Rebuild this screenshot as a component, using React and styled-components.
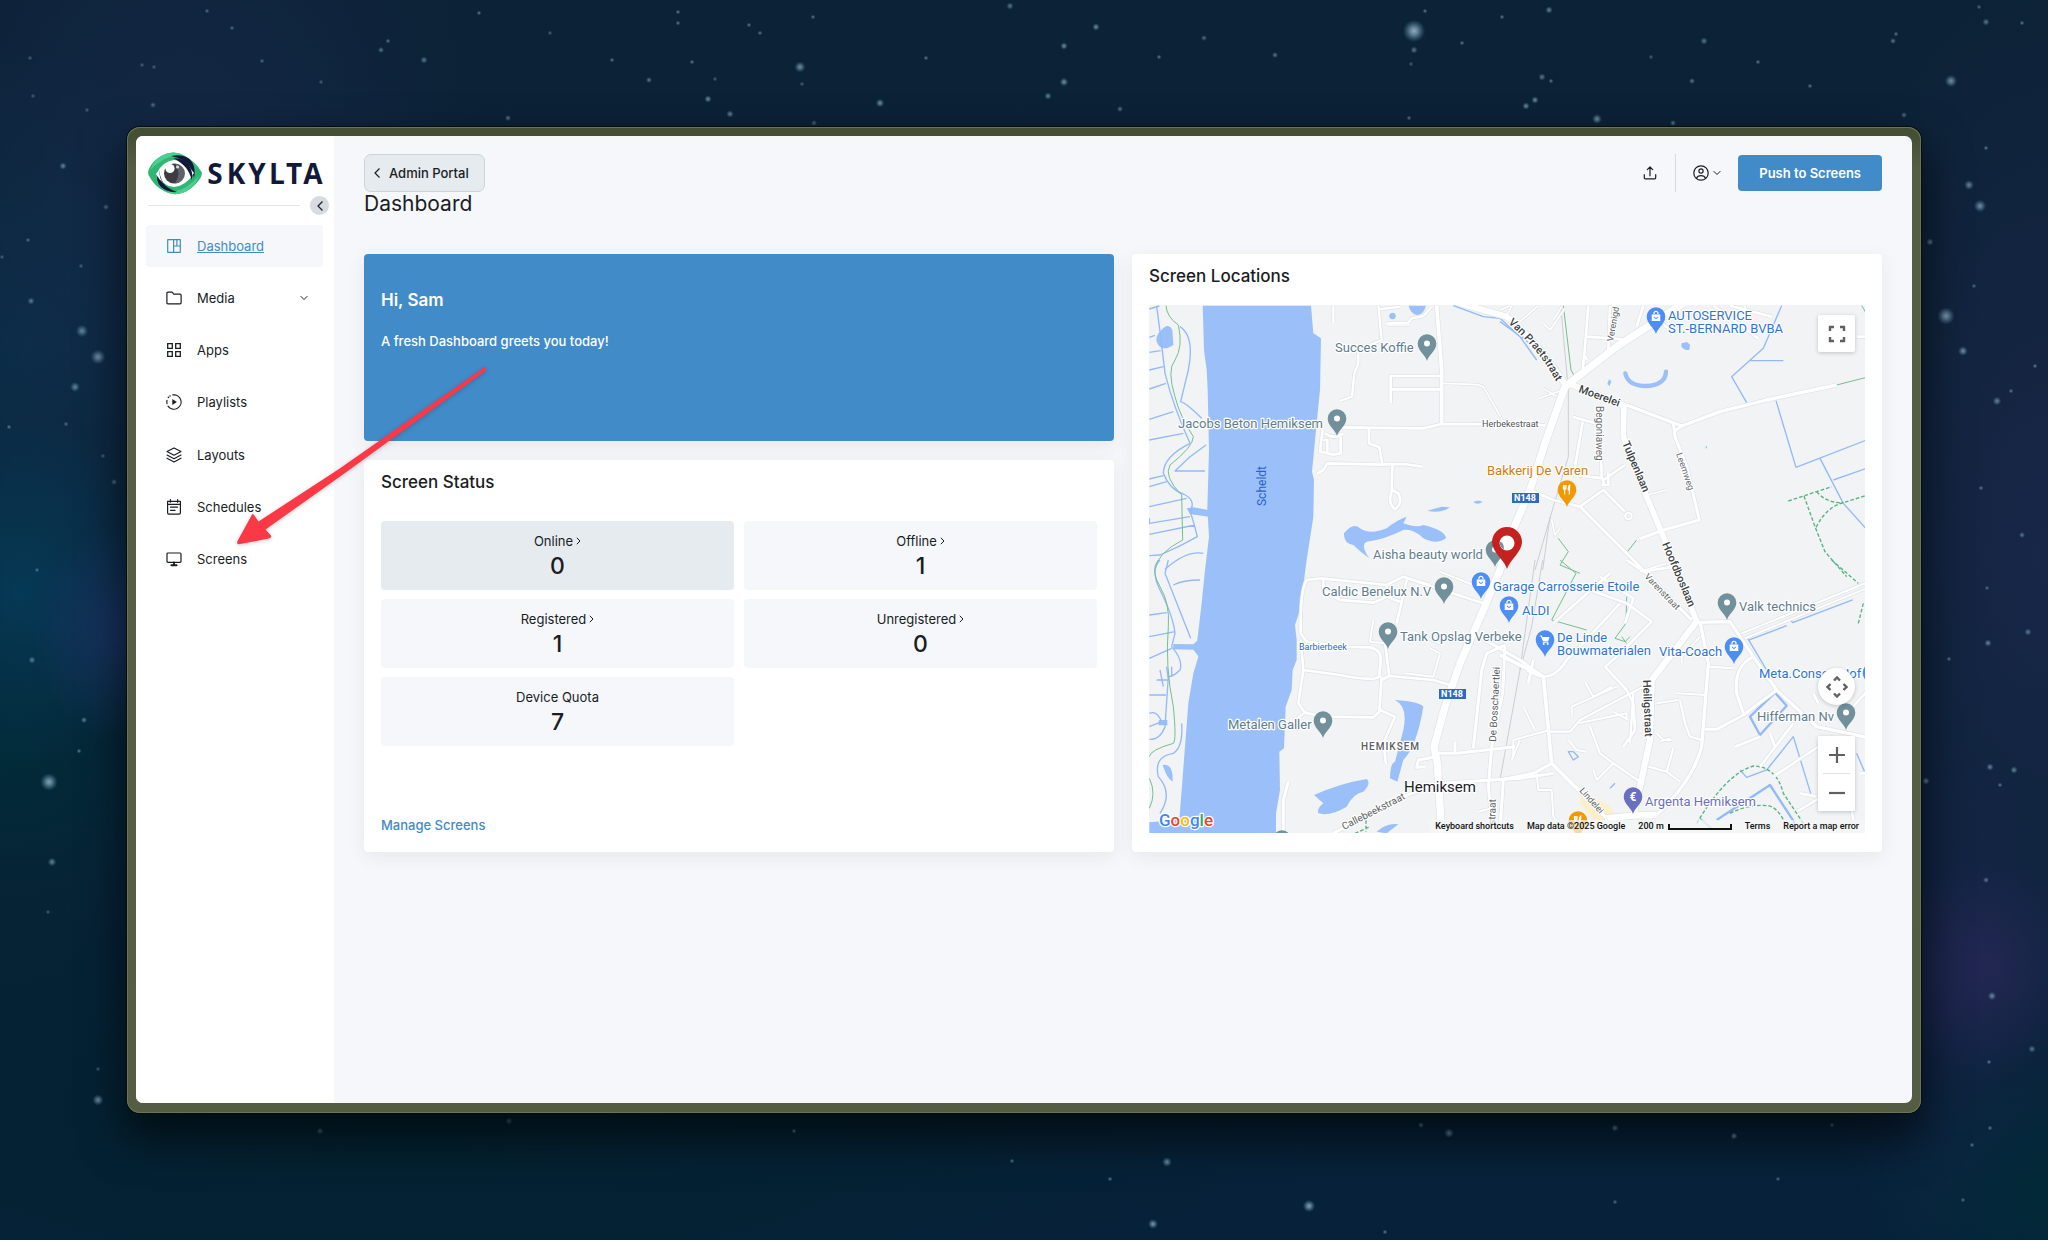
import React from "react";
import styled, { createGlobalStyle, css } from "styled-components";

const sans = `Inter, "Liberation Sans", sans-serif`;
const mapFont = `Roboto, "Liberation Sans", sans-serif`;
const blue = "#418bc9";
const ink = "#1a1d23";

const GlobalStyle = createGlobalStyle`
  *, *::before, *::after { box-sizing: border-box; }
  body { margin: 0; background: #0a2035; font-family: ${sans}; color: ${ink}; }
  h1, h2, p, ul, dl, dd { margin: 0; padding: 0; }
  button { font-family: inherit; cursor: pointer; }
`;

/* ---------- desktop ---------- */

const Desktop = styled.div`
  position: relative;
  isolation: isolate;
  min-height: 100vh;
  padding: 127px;
  display: flex;
  overflow: hidden;
  background:
    radial-gradient(ellipse 100px 110px at 97% 78%, rgba(66, 44, 112, 0.35), transparent),
    radial-gradient(ellipse 130px 260px at 95% 80%, rgba(40, 38, 92, 0.35), transparent),
    radial-gradient(ellipse 90px 110px at 6% 51%, rgba(32, 54, 112, 0.65), transparent),
    radial-gradient(ellipse 150px 180px at 1% 48%, rgba(0, 78, 112, 0.5), transparent),
    radial-gradient(ellipse 300px 420px at 9% 14%, rgba(28, 44, 84, 0.5), transparent),
    radial-gradient(ellipse 240px 300px at 1% 28%, rgba(8, 56, 84, 0.5), transparent),
    radial-gradient(ellipse 260px 160px at 0% 62%, rgba(0, 44, 56, 0.8), transparent),
    radial-gradient(ellipse 900px 260px at 20% 92%, rgba(2, 34, 46, 0.8), transparent),
    radial-gradient(ellipse 200px 160px at 100% 96%, rgba(0, 44, 56, 0.8), transparent),
    radial-gradient(ellipse 260px 600px at 100% 45%, rgba(30, 40, 78, 0.7), transparent),
    linear-gradient(180deg, #0c2236 0%, #0b2238 45%, #062236 78%, #07213a 100%);
`;

const Sky = styled.svg`
  position: absolute;
  inset: 0;
  width: 100%;
  height: 100%;
  z-index: -1;
`;

// [x, y, radius, opacity]
const starField = [
  [800, 67, 4.5, 0.5], [232, 28, 2, 0.35], [207, 11, 2, 0.35], [388, 41, 2, 0.4], [381, 50, 2.5, 0.4],
  [424, 60, 3, 0.4], [262, 61, 2, 0.35], [30, 58, 2, 0.3], [142, 65, 2, 0.3], [154, 67, 2, 0.3],
  [479, 13, 2, 0.4], [550, 33, 2, 0.3], [612, 60, 2, 0.4], [678, 12, 2, 0.4], [678, 23, 2, 0.4],
  [749, 25, 2, 0.4], [760, 33, 2, 0.4], [813, 17, 2, 0.4], [692, 62, 2, 0.4], [649, 80, 2.5, 0.4],
  [708, 99, 3, 0.5], [715, 79, 2, 0.3], [730, 114, 3, 0.45], [880, 103, 3.5, 0.5], [802, 84, 2, 0.3],
  [508, 118, 2.5, 0.4], [814, 123, 2.5, 0.3], [321, 82, 2, 0.3], [153, 105, 2.5, 0.35], [33, 96, 2, 0.3],
  [87, 110, 2, 0.3], [926, 58, 2, 0.4], [1010, 6, 3, 0.4], [63, 166, 3, 0.45], [106, 207, 2.5, 0.35],
  [28, 240, 2, 0.35], [81, 266, 2, 0.3], [31, 301, 3, 0.4], [82, 331, 5, 0.45], [98, 357, 6, 0.5],
  [75, 387, 4, 0.45], [9, 427, 2, 0.4], [66, 424, 2, 0.35], [114, 482, 2.5, 0.35], [103, 456, 2, 0.3],
  [37, 570, 2, 0.35], [2, 257, 2, 0.3], [32, 660, 3, 0.4], [84, 720, 2.5, 0.45], [79, 751, 2, 0.4],
  [49, 782, 7, 0.6], [52, 862, 3.5, 0.45], [48, 912, 2, 0.3], [98, 1100, 4.5, 0.5], [98, 1069, 2, 0.3],
  [320, 1131, 3, 0.3], [509, 1121, 3, 0.3], [794, 1131, 2, 0.4], [1012, 1161, 2, 0.4],
  [1414, 31, 9, 0.65], [1414, 50, 3, 0.4], [1096, 27, 3, 0.5], [1064, 46, 3, 0.5], [1064, 82, 3.5, 0.5],
  [1048, 96, 3, 0.45], [1120, 109, 2.5, 0.4], [1159, 57, 2, 0.4], [1204, 38, 2.5, 0.35], [1275, 55, 2.5, 0.4],
  [1425, 11, 2, 0.4], [1502, 17, 2, 0.4], [1549, 10, 3, 0.45], [1462, 43, 2, 0.4], [1542, 77, 3, 0.4],
  [1535, 100, 3, 0.5], [1526, 106, 3, 0.5], [1597, 119, 4, 0.5], [1551, 81, 2, 0.4], [1411, 64, 2, 0.3],
  [1409, 118, 2, 0.4], [1673, 123, 2.5, 0.4], [1704, 41, 3, 0.4], [1692, 81, 2.5, 0.4], [1651, 57, 2, 0.3],
  [1758, 62, 2, 0.4], [1810, 86, 2, 0.4], [1893, 41, 2.5, 0.4], [1896, 34, 2, 0.4], [1951, 81, 5, 0.5],
  [1986, 22, 3, 0.4], [2022, 23, 2, 0.4], [1904, 115, 2.5, 0.35], [1979, 7, 2, 0.35], [1986, 148, 2, 0.4],
  [1969, 185, 4, 0.45], [1980, 206, 5, 0.5], [1946, 316, 7, 0.55], [1963, 351, 4, 0.5], [1930, 242, 3, 0.4],
  [2011, 391, 2, 0.4], [1997, 401, 3.5, 0.45], [2035, 366, 2, 0.4], [1981, 488, 2, 0.4], [2022, 535, 2.5, 0.4],
  [1974, 286, 2, 0.35], [1987, 588, 2, 0.35], [1988, 643, 3, 0.45], [1949, 659, 2, 0.4], [2028, 632, 3, 0.4],
  [1990, 767, 3, 0.45], [2014, 770, 3, 0.45], [2000, 785, 2, 0.4], [1926, 781, 3, 0.45], [1986, 880, 2.5, 0.4],
  [1992, 996, 3.5, 0.45], [2032, 1049, 3, 0.4], [1989, 1062, 2, 0.4], [1972, 1145, 2, 0.4], [1990, 1128, 2, 0.4],
  [1449, 1133, 4, 0.45], [1615, 1128, 3, 0.45], [1734, 1136, 3, 0.45], [1421, 1125, 2.5, 0.4],
  [1167, 1162, 4, 0.5], [1309, 1206, 5, 0.6], [1153, 1224, 4, 0.55], [1110, 1179, 2, 0.4],
  [1615, 1202, 2, 0.35], [1778, 1179, 2, 0.35], [1963, 1200, 2, 0.35], [1385, 1232, 2, 0.4], [1832, 1125, 2, 0.35],
];

function Stars() {
  return (
    <Sky viewBox="0 0 2048 1240" preserveAspectRatio="xMidYMid slice" aria-hidden="true">
      <defs>
        <radialGradient id="glow">
          <stop offset="0" stopColor="#b4d2e0" />
          <stop offset="0.35" stopColor="#9cc3d8" stopOpacity="0.75" />
          <stop offset="1" stopColor="#5c9db8" stopOpacity="0" />
        </radialGradient>
      </defs>
      {starField.map(([x, y, r, o]) => (
        <circle key={`${x}-${y}`} cx={x} cy={y} r={r * 1.25} opacity={o * 1.2} fill="url(#glow)" />
      ))}
    </Sky>
  );
}

const Frame = styled.div`
  position: relative;
  flex: 1;
  display: flex;
  padding: 9px 9px 10px;
  border-radius: 13px;
  background: linear-gradient(180deg, #454f33 0, #454f33 10px, #555d44 40px, #545c43 100%);
  box-shadow: 0 0 0 1px #060b10, inset 0 0 0 1px #6d7559, 0 22px 44px 4px rgba(0, 0, 0, 0.6);
`;

const Screen = styled.div`
  flex: 1;
  display: flex;
  border-radius: 7px;
  overflow: hidden;
  background: #f5f7fa;
`;

/* ---------- sidebar ---------- */

const Sidebar = styled.aside`
  flex: none;
  width: 198px;
  background: #fff;
  padding: 14px 11px 0 10px;
`;

const LogoLink = styled.a`
  display: block;
  height: 46px;
  svg { display: block; }
`;

const CollapseRow = styled.div`
  display: flex;
  align-items: center;
  gap: 10px;
  height: 19px;
  margin-right: -6px;
`;

const Rule = styled.hr`
  flex: 1;
  height: 1px;
  margin: 0 0 0 2px;
  border: 0;
  background: #e3e6ea;
`;

const CollapseButton = styled.button`
  display: grid;
  place-items: center;
  width: 19px;
  height: 19px;
  padding: 0;
  border: 0;
  border-radius: 50%;
  background: #d8dbdf;
  color: ${ink};
`;

const NavList = styled.ul`
  list-style: none;
  display: flex;
  flex-direction: column;
  justify-content: space-between;
  height: 355px;
  margin-top: 10px;
`;

const NavLink = styled.a`
  display: flex;
  align-items: center;
  gap: 15px;
  height: 42px;
  padding: 0 15px 0 20px;
  border-radius: 4px;
  font-size: 13px;
  color: ${ink};
  text-decoration: none;
  svg { flex: none; }
  span { flex: 1; }
  ${(p) => p.$active && css`
    background: #f5f7fa;
    color: ${blue};
    text-decoration: underline;
  `}
`;

/* ---------- main column ---------- */

const Main = styled.main`
  flex: 1;
  min-width: 0;
  padding: 18px 30px;
`;

const TopBar = styled.header`
  display: flex;
  align-items: center;
  justify-content: space-between;
  height: 38px;
`;

const PortalButton = styled.button`
  display: flex;
  align-items: center;
  gap: 8px;
  height: 38px;
  padding: 0 15px 0 8px;
  border: 1px solid #ccd3da;
  border-radius: 7px;
  background: #e6ebf0;
  font-size: 13px;
  font-weight: 500;
  color: ${ink};
`;

const Actions = styled.div`
  display: flex;
  align-items: center;
  height: 38px;
`;

const IconButton = styled.button`
  display: flex;
  align-items: center;
  gap: 4px;
  height: 38px;
  padding: 0 17px;
  border: 0;
  background: none;
  color: ${ink};
`;

const Separator = styled.span`
  width: 1px;
  height: 38px;
  background: #d7dade;
`;

const PrimaryButton = styled.button`
  height: 36px;
  padding: 0 21px;
  border: 0;
  border-radius: 4px;
  background: ${blue};
  color: #fff;
  font-size: 13px;
  font-weight: 600;
`;

const PageTitle = styled.h1`
  font-size: 21px;
  line-height: 24px;
  font-weight: 400;
`;

const Board = styled.div`
  display: grid;
  grid-template-columns: 1fr 1fr;
  gap: 18px;
  margin-top: 38px;
`;

const Column = styled.div`
  display: flex;
  flex-direction: column;
  gap: 19px;
`;

const Card = styled.section`
  display: flex;
  flex-direction: column;
  padding: 12px 17px 19px;
  border-radius: 4px;
  background: #fff;
  box-shadow: 0 5px 18px rgba(60, 70, 90, 0.08);
  ${(p) => p.$grow && "flex: 1;"}
`;

const CardTitle = styled.h2`
  font-size: 17px;
  line-height: 20px;
  font-weight: 500;
  margin-bottom: ${(p) => p.$gap}px;
`;

const Hero = styled(Card)`
  height: 187px;
  padding: 36px 17px 0;
  background: ${blue};
  color: #fff;
`;

const Greeting = styled.h2`
  font-size: 17px;
  line-height: 20px;
  font-weight: 600;
`;

const HeroText = styled.p`
  margin-top: 23px;
  font-size: 13px;
  line-height: 16px;
  font-weight: 500;
`;

const Tiles = styled.div`
  display: grid;
  grid-template-columns: 1fr 1fr;
  gap: 9px 10px;
`;

const tileLook = css`
  display: flex;
  flex-direction: column;
  align-items: center;
  gap: 5px;
  height: 69px;
  padding: 12px;
  border-radius: 4px;
  background: ${(p) => (p.$current ? "#e6ebf0" : "#f5f7fa")};
  color: ${ink};
  text-decoration: none;
`;

const TileLink = styled.a`${tileLook}`;
const TileBox = styled.div`${tileLook}`;

const TileLabel = styled.span`
  display: flex;
  align-items: center;
  gap: 3px;
  font-size: 13px;
  line-height: 16px;
`;

const TileValue = styled.strong`
  font-size: 23px;
  line-height: 24px;
  font-weight: 500;
`;

const ManageLink = styled.a`
  align-self: flex-start;
  margin-top: auto;
  font-size: 13px;
  line-height: 16px;
  font-weight: 500;
  color: ${blue};
  text-decoration: none;
`;

/* ---------- icons ---------- */

const Icon = ({ size = 16, width = 1.3, children }) => (
  <svg width={size} height={size} viewBox="0 0 16 16" fill="none" stroke="currentColor"
    strokeWidth={width} strokeLinejoin="round" strokeLinecap="round" aria-hidden="true">
    {children}
  </svg>
);

const ChevronLeft = () => (
  <svg width="8" height="12" viewBox="0 0 8 12" fill="none" stroke="currentColor" strokeWidth="1.2" aria-hidden="true">
    <path d="M6.500 1.500 2 6l4.500 4.500" />
  </svg>
);
const ChevronDown = () => (
  <svg width="8" height="6" viewBox="0 0 8 6" fill="none" stroke="currentColor" strokeWidth="1" aria-hidden="true">
    <path d="M.7 1.2 4 4.5l3.300-3.300" />
  </svg>
);
const ChevronRight = () => (
  <svg width="5" height="8" viewBox="0 0 5 8" fill="none" stroke="currentColor" strokeWidth="1" aria-hidden="true">
    <path d="M.8.8 4 4 .8 7.200" />
  </svg>
);

const icons = {
  Dashboard: <Icon width={1.2}><path d="M1.700 1.700h12.600v12.600H1.700zM7.600 1.700v12.600M7.600 8h6.700M10.900 1.700V8" /></Icon>,
  Media: <Icon width={1.2}><path d="M.9 3.200q0-1 1-1h4.200l1.700 2h6.300q1 0 1 1v7.600q0 1-1 1H1.900q-1 0-1-1z" /></Icon>,
  Apps: <Icon width={1.300}><path d="M1.700 1.700h4.600v4.600H1.700zM9.700 1.700h4.600v4.600H9.700zM1.700 9.700h4.600v4.600H1.700zM9.700 9.700h4.600v4.600H9.700z" strokeLinejoin="miter" /></Icon>,
  Playlists: (
    <Icon width={1.2}>
      <path d="M6.800.9A7.200 7.200 0 1 1 2 12.200M1 9.600A7 7 0 0 1 1 6.400" />
      <path d="M2.400 3.300v.1M4 1.900v.1" strokeWidth="1.500" />
      <path d="M6.300 5v6l4.600-3z" fill="currentColor" stroke="none" />
    </Icon>
  ),
  Layouts: <Icon width={1.1}><path d="M8 .9 15 4.600 8 8.300 1 4.600zM1 8l7 3.700L15 8M1 11.200l7 3.700 7-3.700" /></Icon>,
  Schedules: <Icon width={1.2}><path d="M1.600 2.400h12.800v11.400q0 1.300-1.300 1.300H2.900q-1.300 0-1.300-1.300zM1.600 5.400h12.800M4.400.6v2.600M11.600.6v2.600M4.500 8.200h7M4.500 11.300h4.600" /></Icon>,
  Screens: <Icon width={1.2}><path d="M2 2h12q1 0 1 1v7.300q0 1-1 1H2q-1 0-1-1V3q0-1 1-1z" /><path d="M5.400 14.300h5.200M8 11.500v2.600" strokeWidth="1.900" /></Icon>,
};

const Logo = () => (
  <svg width="178" height="46" viewBox="0 0 178 46" role="img" aria-label="Skylta">
    <path d="M2.500 25C.5 20 7 10 16 5.500Q28-.5 39 6 50 12 55.500 22 57 25 53 30 47 38 40 41.500 28 47 18 41 8 36 2.500 25z" fill="#2fb673" />
    <path d="M16 5.500Q28-.5 39 6 27 4 17 10 10 14 4 20 8 10 16 5.500zM40 41.500Q28 47 18 41q12 2 22-4 8-5 13-12Q50 36 40 41.500z" fill="#4ccf8f" />
    <path d="M25 6Q40 3 46 12q4 7 2 16Q45 14 36 10 31 7 25 6zM12 20q-3 11 3 17 7 6 16 5-9-3-14-9-4-5-5-13z" fill="#12183a" />
    <path d="M10 24Q17 11 28 10q12 0 20 13-8 13-20 14Q16 36 10 24z" fill="#fff" />
    <path d="M27 8Q40 8 44.500 18q3 7 1 12Q43 16 27 8zM13 18q0 11 5 16 4 4 10 6Q14 36 13 18z" fill="#12183a" />
    <circle cx="28" cy="23.500" r="10" fill="#3b3d42" />
    <path d="M29 13.500A10 10 0 0 1 29 33.500Q36 23 29 13.500z" fill="#606269" />
    <circle cx="24" cy="18.500" r="4.600" fill="#fff" />
    <circle cx="31.500" cy="17" r="1.500" fill="#dfe1e4" />
    <text x="69 90 111 131 148 167" y="34" textAnchor="middle" fontFamily={`"Open Sans", ${sans}`} fontWeight="700" fontSize="28" fill="#12183a">SKYLTA</text>
  </svg>
);

/* ---------- map ---------- */

const MapBox = styled.div`
  position: relative;
  aspect-ratio: 716 / 528;
  overflow: hidden;
  background: #f1f3f4;
  font-family: ${mapFont};
`;

const MapDrawing = styled.svg`
  display: block;
  width: 100%;
  height: 100%;
`;

const mapButton = css`
  display: grid;
  place-items: center;
  width: 37px;
  height: 37px;
  padding: 0;
  border: 0;
  background: #fff;
  color: #5f6062;
`;

const FullscreenButton = styled.button`
  ${mapButton}
  position: absolute;
  top: 10px;
  right: 10px;
  border-radius: 2px;
  box-shadow: 0 1px 4px rgba(0, 0, 0, 0.2);
`;

const MapTools = styled.div`
  position: absolute;
  right: 10px;
  bottom: 22px;
  display: flex;
  flex-direction: column;
  gap: 31px;
`;

const CameraButton = styled.button`
  ${mapButton}
  border-radius: 50%;
  box-shadow: 0 1px 4px rgba(0, 0, 0, 0.2);
`;

const ZoomGroup = styled.div`
  border-radius: 2px;
  background: #fff;
  box-shadow: 0 1px 4px rgba(0, 0, 0, 0.2);
`;

const ZoomButton = styled.button`
  ${mapButton}
  border-radius: 2px;
`;

const ZoomRule = styled.div`
  height: 1px;
  margin: 0 5px;
  background: #e2e2e2;
`;

const Attribution = styled.div`
  position: absolute;
  right: 0;
  bottom: 0;
  display: flex;
  align-items: center;
  gap: 13px;
  height: 13px;
  padding: 0 6px;
  background: rgba(245, 246, 247, 0.7);
  font-size: 9px;
  line-height: 13px;
  font-weight: 500;
  color: #111;
`;

const AttributionLink = styled.a`
  color: inherit;
  text-decoration: none;
`;

const AttributionButton = styled.button`
  padding: 0;
  border: 0;
  background: none;
  font: inherit;
  color: inherit;
`;

const ScaleBar = styled.span`
  display: flex;
  align-items: center;
  gap: 4px;
  &::after {
    content: "";
    width: 64px;
    height: 6px;
    border: 2px solid #111;
    border-top: 0;
  }
`;

// The map is charted in four sheets laid edge to edge; each road is [width, path].
const sheets = [
  {
    at: "0 0",
    roads: [
      [7, "M580 47V100M715 47L725 150 690 165M718 58L780 50M655 170L655 220 643 250 636 320 600 333M740 100L805 98 815 85 850 78 875 50"],
      [11, "M890 47L905 240V402"],
      [8, "M752 340V258H905M755 298H905M600 412L850 415 905 402 1090 403 1215 406"],
      [5, "M910 280L1015 284 1030 290 1090 395M1115 47L1100 80M740 105h70"],
      [8, "M687 415V460L718 472 727 522M530 552L550 540 562 520 720 524 790 522 848 530"],
      [8, "M757 525L755 605Q742 640 765 658 790 640 775 610L757 600M548 420L540 485 580 494 602 490V440M550 450h12v36M555 430Q580 450 610 430"],
      [18, "M960 40L1100 80Q1190 150 1280 290"],
    ],
    streams: "M50 50Q60 120 75 250 100 350 150 460M28 57L58 48M28 142L45 136M28 187L62 182M28 240L70 230M28 297L78 280M28 388L100 365M28 450L130 430M120 110Q165 140 145 240L122 335Q140 340 185 385M198 465L150 500 105 543H195M150 460Q70 500 70 550 90 600 130 612 170 630 150 665 160 690 172 740 120 770 60 795L28 797M28 567L70 557M28 590L80 575M28 650L140 625M28 700L150 680M28 733L165 705M190 790Q140 780 75 838M28 685v18M940 47L1030 80 1080 85 1140 140 1190 210",
    paths: "M78 47Q80 80 115 105 130 170 105 210 80 240 105 320 120 380 160 440 160 470 90 525 70 560 125 615L128 750Q50 790 45 840",
    ponds: "M612 730Q640 695 660 715 690 735 740 715 770 690 800 680L790 700Q830 715 850 705 915 720 918 745 890 765 850 745 820 715 790 720 730 750 680 755 660 765 688 805 660 785 640 765 610 760 612 730ZM862 662L905 650 930 652Q900 672 862 662ZM1000 636Q1015 628 1028 636 1012 646 1000 636ZM806 47h52q-8 28-28 28-18-4-24-28ZM757 68a10 10 0 1 0 1 0ZM62 122Q85 95 97 120L100 165Q70 185 55 165 40 145 62 122Z",
  },
  {
    at: "1080 0",
    roads: [
      [5, "M0 60L30 47M60 95L115 47M130 100l20 20 45-65M160 90l25-40M120 325L160 310 190 300M130 295L170 320M155 690L165 735 180 715M440 615L500 600M420 845L500 820"],
      [8, "M265 47L255 170 248 240M250 190L262 210M258 140L370 148M330 47L325 185M430 47L410 110M470 80L520 135M640 47L775 145M690 47L815 80M735 47v30M1070 140H1100"],
      [8, "M300 350L305 560 315 590M218 380L285 400M248 395L225 530M220 555L310 565M90 600L160 630 240 650 310 600 375 665M310 570L375 525M325 550v35h-20"],
      [6, "M385 668a10 10 0 1 0 1 0Z"],
      [9, "M240 650L440 850 545 960 575 990M520 400L525 440 560 530 598 690 490 720 410 750M520 425L550 405"],
      [10, "M380 345L545 408 660 365 800 330 1010 285"],
      [17, "M372 345L370 440 440 620 490 740 590 995"],
      [22, "M195 290L350 170 550 40M195 290L135 460 90 600 22 760"],
      [17, "M205 280L375 348"],
    ],
    streams: "M845 47L790 175 695 260 740 338M752 212L850 212M828 332L888 532 1100 450M960 505L1030 640 1100 718M1000 570L1100 535M0 95L70 145 95 165",
    paths: "M190 47L213 240 223 258M1085 47l12 20M1010 285L1100 262M175 745L205 785 180 825 240 850M380 788L410 750",
    dashes: "M865 633L995 590M912 618L945 710 975 785 1040 860M948 712Q980 650 1030 638L1100 616M950 605Q980 640 1030 638",
    rails: "M182 47L205 300 205 500 160 650 105 840M150 680L128 840",
    ponds: "M545 160l16-4 9 8-2 16q-14 2-24-10ZM327 268l7 6-5 14-7-6ZM617 469h4v6h-4Z",
    crescent: "M376 250Q384 288 440 288 496 285 498 245",
  },
  {
    at: "0 810",
    roads: [
      [8, "M500 60L545 55 740 75 790 50 870 75M500 60Q480 90 482 220L500 245 600 260 690 262Q725 270 722 300L718 350Q700 365 600 345L490 330M482 240L490 330 475 430 495 458 550 470 700 472 718 455 725 350"],
      [8, "M550 60V90L600 120 700 128 740 110 780 125M740 75V115M800 60L770 190M800 55L1030 130M495 458L470 475M725 360L748 348"],
      [6, "M700 180L690 245 735 250M795 340L880 350 900 280 870 265M900 35L1000 75M820 215L910 255M1115 600L1140 540M1015 755L1055 745"],
      [8, "M735 250L748 348 880 360 940 378M720 450L765 470 730 550 738 612"],
      [9, "M1095 255L1040 280 1025 330 1000 565M880 580L950 580 1125 560M945 545V580M880 592L835 600 830 622 855 620M905 670L1140 655 1240 640M1095 260L1088 400 1055 560 1045 680 1060 820M1090 660L1080 810"],
      [9, "M580 820L790 710 900 668M445 665L430 720V815"],
      [9, "M1000 220L1140 300 1210 350"],
      [22, "M1102 -50L1080 30 1030 150 960 310 915 440 882 560 892 610 905 820"],
    ],
    streams: "M60 0Q30 30 60 90 100 170 105 220L95 260Q130 300 120 330 100 350 85 350M100 75Q130 60 180 60M85 0L75 40 152 235M28 165L80 158M28 230L105 215M28 295L95 265M60 330L70 380M80 320L85 360M95 320v30M50 360H85M85 350L75 500Q60 540 28 538M28 405H78M28 460Q50 450 65 485L28 500M125 490Q130 560 100 580 40 590 55 650 100 700 60 760",
    paths: "M55 0Q30 30 60 80 90 130 85 200 75 320 100 440 110 540 100 550 30 570 28 590M28 655Q50 700 28 745",
    dashes: "M645 820L690 800M678 780V815",
    ponds: "M765 420Q840 425 850 440 830 560 790 600L772 665 750 655Q750 610 765 605L790 510Q805 440 765 420ZM522 705Q600 670 680 657 695 670 670 695 640 700 620 740 570 770 535 760 530 745 550 730ZM710 815Q740 788 775 793L740 820ZM68 615Q100 610 98 665 80 655 68 615ZM57 480h25v16H55Z",
  },
  {
    at: "1080 810",
    roads: [
      [11, "M0 285L130 350 155 610 320 775"],
      [8, "M130 350Q170 350 200 300L230 270 360 130M80 330L120 350M160 190L330 40M270 90L380 130 455 185 350 290M315 320L380 390 400 430 405 510 370 560M350 290L315 320M380 0L430 35 520 20M300 50L400 115 375 190"],
      [6, "M215 470V440L350 380M235 490L380 460V480M340 455L385 480M255 365L280 410 335 380M40 590V540L150 510M70 440L105 510M115 690h40L160 770 190 800M110 640L115 690M280 630L290 660 340 610M500 635L540 665M470 430L535 420M530 400L620 405M630 320L700 325M545 310V290L600 230M470 520l20 20h25M480 545l30-10M205 540l25 30 30 5"],
      [7, "M150 515H210L240 480 430 380M270 500L300 580 340 610 420 665M390 550L400 400M445 620L500 635 520 565M540 420L555 490 570 530 605 540"],
      [9, "M155 610L100 640 0 660M760 290Q700 320 710 400L730 460M830 390L730 465 650 508H615M85 370L100 300"],
      [8, "M880 490L780 620M810 520L825 560M705 560L780 530M820 650L1000 530M890 755L1000 690M940 400L955 430M1100 395L1050 450M1050 720L1060 780M1080 640h20M900 700l50 10"],
      [10, "M470 765Q580 660 605 560L625 310 600 185M590 187L690 185 760 290 830 390 950 500 1100 532"],
      [6, "M725 220L1100 68M735 235L1100 85"],
      [19, "M590 185L455 360 450 540 420 680 400 765M315 775L400 767 470 765"],
    ],
    streams: "M748 240L860 197M868 175L878 188 1058 120M740 230L800 330M720 630L740 652 800 630 880 530 935 710M1070 580L1098 645M600 775L640 810M955 505L1030 520M205 575l15 25 15-10-15-15ZM330 685l15-15",
    canals: "M750 470L825 398 860 437 780 525ZM650 780L810 675 885 790",
    paths: "M180 0L228 40 155 180 225 200 260 210M380 110L378 190 345 235 375 245 390 230M365 230l15 20",
    dashes: "M995 0L1075 70M1090 130L1075 190M590 790Q680 640 760 618 830 620 850 700L910 790M690 760Q750 730 810 738 840 750 860 800",
    rails: "M105 0L60 330 0 660M128 0L95 200 60 330",
  },
];

const riverBank =
  "M188 47L192 180 200 240 203 300 207 480 202 655 207 740 195 840 185 940 172 1050 172 1090 175 1100 160 1150 145 1240 135 1370 118 1590 28 1597V1632H408L408 1570 420 1500 418 1385 432 1375 437 1250 455 1200 458 1140 470 1110 470 1050 465 1005 480 960 500 810 520 680 522 570 516 545 528 420 540 300 543 145 520 130 513 47Z";

const teal = "#5f7d8c";
const poiBlue = "#2f74d8";

const places = [
  [186, 47, "Succes Koffie", teal],
  [29, 123, "Jacobs Beton Hemiksem", teal],
  [224, 254, "Aisha beauty world", teal],
  [338, 170, "Bakkerij De Varen", "#d97a10"],
  [173, 291, "Caldic Benelux N.V", teal],
  [344, 286, "Garage Carrosserie Etoile", poiBlue],
  [373, 310, "ALDI", poiBlue],
  [251, 336, "Tank Opslag Verbeke", teal],
  [408, 337, "De Linde", poiBlue],
  [408, 350, "Bouwmaterialen", poiBlue],
  [510, 351, "Vita-Coach", poiBlue],
  [590, 306, "Valk technics", teal],
  [610, 373, "Meta.Conse", poiBlue],
  [691, 373, "Hof", poiBlue],
  [608, 416, "Hifferman Nv", teal],
  [79, 424, "Metalen Galler", teal],
  [496, 501, "Argenta Hemiksem", "#6b6fc2"],
  [519, 15, "AUTOSERVICE", poiBlue],
  [519, 28, "ST.-BERNARD BVBA", poiBlue],
];

// [x, y, angle, size, label, colour]
const streets = [
  [333, 122, 0, 9, "Herbekestraat", "#4f5256"],
  [429, 87, 20, 11, "Moerelei", "#3c3f43"],
  [447, 101, 90, 10, "Begoniaweg", "#6b6e72"],
  [473, 138, 67, 11, "Tulpenlaan", "#3c3f43"],
  [527, 149, 71, 9, "Leemweg", "#6b6e72"],
  [513, 239, 67, 11, "Hoofdboslaan", "#3c3f43"],
  [495, 272, 46, 9, "Varenstraat", "#5b5e62"],
  [494, 375, 88, 11, "Heiligstraat", "#3c3f43"],
  [464, 37, -80, 9, "Verenigd", "#5b5e62"],
  [347, 437, -87, 10, "De Bosschaertlei", "#5b5e62"],
  [346, 520, -88, 10, "straat", "#5b5e62"],
  [195, 525, -27, 10, "Callebeekstraat", "#5b5e62"],
  [430, 486, 48, 9, "Lindelei", "#5b5e62"],
  [150, 345, 0, 9, "Barbierbeek", "#2f66c0"],
  [117, 201, -90, 12, "Scheldt", "#2a62c4"],
];

const glyphs = {
  dot: <circle cx="0" cy="-17.500" r="3" fill="#fff" />,
  bag: (
    <g>
      <path d="M-4.300-19.500h8.600v6.500h-8.600z" fill="#fff" />
      <path d="M-2-19.500v-1.200a2 2 0 0 1 4 0v1.200" fill="none" stroke="#fff" strokeWidth="1.200" />
      <path d="M-1.600-17.200a1.600 1.600 0 0 0 3.200 0" fill="none" stroke="#4c8df6" />
    </g>
  ),
  cart: (
    <g fill="#fff">
      <path d="M-5.200-21.500h2l.6 1.500h7.200l-1.500 4.200h-5.200l-2-4.600h-1.100zM-2.200-15.300h5.600v1h-5.600z" />
      <circle cx="-1.300" cy="-13" r="1" /><circle cx="2.700" cy="-13" r="1" />
    </g>
  ),
  food: (
    <g stroke="#fff" strokeWidth="1.100" fill="none">
      <path d="M-3.600-22v3.200q0 1.200 1.300 1.200t1.300-1.200V-22M-2.300-22v9.500" />
      <path d="M2.300-12.500v-4.500H1.200q0-4.500 1.600-5z" fill="#fff" />
    </g>
  ),
  euro: <text x="0" y="-13" textAnchor="middle" fontSize="12" fontWeight="700" fill="#fff">€</text>,
};

// [tip x, tip y, colour, glyph]
const pins = [
  [278, 56, "#71909b", "dot"], [188, 131, "#71909b", "dot"], [346, 262, "#71909b", "dot"],
  [295, 299, "#71909b", "dot"], [239, 344, "#71909b", "dot"], [578, 315, "#71909b", "dot"],
  [697, 425, "#71909b", "dot"], [174, 433, "#71909b", "dot"], [133, 552, "#71909b", "dot"],
  [332, 294, "#4c8df6", "bag"], [360, 318, "#4c8df6", "bag"], [585, 359, "#4c8df6", "bag"],
  [507, 29, "#4c8df6", "bag"], [396, 352, "#4c8df6", "cart"], [723, 385, "#4c8df6", "bag"],
  [418, 202, "#f29900", "food"], [429, 533, "#f29900", "food"], [484, 509, "#6b6fc2", "euro"],
];

const shields = [[363, 188], [290, 384]];

const googleLetters = [["G", "#4285f4"], ["o", "#ea4335"], ["o", "#fbbc04"], ["g", "#4285f4"], ["l", "#34a853"], ["e", "#ea4335"]];

function TownMap() {
  const halo = { stroke: "#fff", strokeWidth: 2.4, strokeLinejoin: "round", paintOrder: "stroke" };
  return (
    <MapDrawing viewBox="0 0 716 528" preserveAspectRatio="xMidYMid slice" role="img" aria-label="Map of Hemiksem">
      <defs>
        <path id="praet" d="M359 18Q384 40 398 61L414 88" />
      </defs>
      <rect width="716" height="528" fill="#f1f3f4" />
      <g transform="scale(.33333) translate(-27 -45)" fill="none" strokeLinejoin="round">
        <path d="M1325 1500L1410 1550 1430 1580 1370 1600 1320 1540Z" fill="#fdf0c8" />
        <g fill="#9bc0f9">
          <path d={riverBank} />
          <path d="M140 655L160 652 205 660V680L150 672ZM100 1062L160 1063 180 1045V1105L160 1079 100 1078Z" />
        </g>
        {sheets.map((s) => (
          <g key={s.at} transform={`translate(${s.at})`}>
            {s.ponds && <path d={s.ponds} fill="#9bc0f9" />}
            {s.crescent && <path d={s.crescent} stroke="#9bc0f9" strokeWidth="13" strokeLinecap="round" />}
            {s.rails && <path d={s.rails} stroke="#cbced2" strokeWidth="3" />}
            <path d={s.streams} stroke="#94b9f8" strokeWidth="4" />
            {s.canals && <path d={s.canals} stroke="#94b9f8" strokeWidth="7" />}
            <path d={s.paths} stroke="#76bd90" strokeWidth="3" />
            {s.dashes && <path d={s.dashes} stroke="#58b17f" strokeWidth="4" strokeDasharray="11 6" />}
          </g>
        ))}
        {sheets.map((s) => (
          <g key={s.at} transform={`translate(${s.at})`} stroke="#dfe2e6">
            {s.roads.map(([w, d]) => <path key={d} d={d} strokeWidth={w + 4} />)}
          </g>
        ))}
        {sheets.map((s) => (
          <g key={s.at} transform={`translate(${s.at})`} stroke="#fff">
            {s.roads.map(([w, d]) => <path key={d} d={d} strokeWidth={w} />)}
          </g>
        ))}
      </g>

      {streets.map(([x, y, a, size, label, fill]) => (
        <text key={label} transform={`translate(${x} ${y}) rotate(${a})`} fontSize={size}
          fontWeight={size === 11 ? 500 : 400} fill={fill}
          {...(label === "Scheldt" ? {} : halo)}>{label}</text>
      ))}
      <text fontSize="11" fontWeight="500" fill="#3c3f43" {...halo}><textPath href="#praet">Van Praetstraat</textPath></text>
      <text x="212" y="445" fontSize="10" fontWeight="500" letterSpacing="1" fill="#5b6066" {...halo}>HEMIKSEM</text>
      <text x="255" y="487" fontSize="15" fill="#202124" {...halo}>Hemiksem</text>

      {shields.map(([x, y]) => (
        <g key={x}>
          <rect x={x} y={y} width="27" height="10" fill="#2f6ac2" />
          <text x={x + 13} y={y + 8} textAnchor="middle" fontSize="9" fontWeight="700" fill="#fff">N148</text>
        </g>
      ))}

      {pins.map(([x, y, fill, kind]) => (
        <g key={`${x}-${y}`} transform={`translate(${x} ${y})`}>
          <path d="M0 0C-1.500-6-9.300-10-9.300-17.500a9.300 9.300 0 0 1 18.600 0C9.300-10 1.500-6 0 0z" fill={fill} />
          {glyphs[kind]}
        </g>
      ))}
      {places.map(([x, y, label, fill]) => (
        <text key={label} x={x} y={y} fontSize="13" fill={fill} {...halo}>{label}</text>
      ))}

      <path d="M358 264C356 256 343 247 343 237a15 15 0 0 1 30 0C373 247 360 256 358 264z" fill="#c5221f" />
      <circle cx="358" cy="238" r="7.500" fill="#fff" />
      <path d="M350.600 237q4-1 4.500 7.400-4-1.500-4.500-7.400z" fill="#71909b" />

      <text x="10" y="521" fontSize="17" fontWeight="500" {...halo}>
        {googleLetters.map(([c, fill], i) => <tspan key={i} fill={fill}>{c}</tspan>)}
      </text>
    </MapDrawing>
  );
}

/* ---------- annotation ---------- */

const Arrow = styled.svg`
  position: absolute;
  left: 108px;
  top: 236px;
  pointer-events: none;
  filter: drop-shadow(0 1px 2px rgba(0, 0, 0, 0.2));
`;

const nav = ["Dashboard", "Media", "Apps", "Playlists", "Layouts", "Schedules", "Screens"];

const stats = [
  { label: "Online", value: 0, link: true, current: true },
  { label: "Offline", value: 1, link: true },
  { label: "Registered", value: 1, link: true },
  { label: "Unregistered", value: 0, link: true },
  { label: "Device Quota", value: 7 },
];

function Stat({ label, value, link, current }) {
  const body = (
    <>
      <TileLabel>{label}{link && <ChevronRight />}</TileLabel>
      <TileValue>{value}</TileValue>
    </>
  );
  return link ? <TileLink href="#screens" $current={current}>{body}</TileLink> : <TileBox>{body}</TileBox>;
}

export default function App() {
  return (
    <Desktop>
      <GlobalStyle />
      <Stars />
      <Frame>
        <Screen>
          <Sidebar>
            <LogoLink href="#home"><Logo /></LogoLink>
            <CollapseRow>
              <Rule />
              <CollapseButton type="button" aria-label="Collapse menu"><ChevronLeft /></CollapseButton>
            </CollapseRow>
            <nav aria-label="Main">
              <NavList>
                {nav.map((name) => (
                  <li key={name}>
                    <NavLink href={`#${name.toLowerCase()}`} $active={name === "Dashboard"}>
                      {icons[name]}
                      <span>{name}</span>
                      {name === "Media" && <ChevronDown />}
                    </NavLink>
                  </li>
                ))}
              </NavList>
            </nav>
          </Sidebar>

          <Main>
            <TopBar>
              <PortalButton type="button"><ChevronLeft />Admin Portal</PortalButton>
              <Actions>
                <IconButton type="button" aria-label="Upload">
                  <Icon size={16} width={1.2}><path d="M8 10.800V2.300M5.300 4.700 8 2l2.700 2.700M2.300 9.700v3.100q0 1.100 1.100 1.100h9.200q1.100 0 1.100-1.100V9.700" /></Icon>
                </IconButton>
                <Separator />
                <IconButton type="button" aria-label="Account">
                  <Icon size={16} width={1.2}>
                    <circle cx="8" cy="8" r="7.200" /><circle cx="8" cy="6" r="2.100" />
                    <path d="M3.500 13.300q1-2.700 4.500-2.700t4.500 2.700" />
                  </Icon>
                  <ChevronDown />
                </IconButton>
                <PrimaryButton type="button">Push to Screens</PrimaryButton>
              </Actions>
            </TopBar>
            <PageTitle>Dashboard</PageTitle>

            <Board>
              <Column>
                <Hero>
                  <Greeting>Hi, Sam</Greeting>
                  <HeroText>A fresh Dashboard greets you today!</HeroText>
                </Hero>
                <Card $grow>
                  <CardTitle $gap={29}>Screen Status</CardTitle>
                  <Tiles>
                    {stats.map((s) => <Stat key={s.label} {...s} />)}
                  </Tiles>
                  <ManageLink href="#screens">Manage Screens</ManageLink>
                </Card>
              </Column>

              <Card>
                <CardTitle $gap={19}>Screen Locations</CardTitle>
                <MapBox>
                  <TownMap />
                  <FullscreenButton type="button" aria-label="Toggle fullscreen view">
                    <svg width="18" height="18" viewBox="0 0 18 18" fill="none" stroke="currentColor" strokeWidth="2.400" aria-hidden="true">
                      <path d="M2 6V2h4M12 2h4v4M16 12v4h-4M6 16H2v-4" />
                    </svg>
                  </FullscreenButton>
                  <MapTools>
                    <CameraButton type="button" aria-label="Map camera controls">
                      <svg width="22" height="22" viewBox="0 0 22 22" fill="none" stroke="currentColor" strokeWidth="2.400" aria-hidden="true">
                        <path d="M8 4.500l3-3 3 3M8 17.500l3 3 3-3M4.500 8l-3 3 3 3M17.500 8l3 3-3 3" />
                      </svg>
                    </CameraButton>
                    <ZoomGroup>
                      <ZoomButton type="button" aria-label="Zoom in">
                        <svg width="16" height="16" viewBox="0 0 16 16" stroke="currentColor" strokeWidth="2.200" aria-hidden="true"><path d="M8 0v16M0 8h16" /></svg>
                      </ZoomButton>
                      <ZoomRule />
                      <ZoomButton type="button" aria-label="Zoom out">
                        <svg width="16" height="16" viewBox="0 0 16 16" stroke="currentColor" strokeWidth="2.200" aria-hidden="true"><path d="M0 8h16" /></svg>
                      </ZoomButton>
                    </ZoomGroup>
                  </MapTools>
                  <Attribution>
                    <AttributionButton type="button">Keyboard shortcuts</AttributionButton>
                    <span>Map data ©2025 Google</span>
                    <ScaleBar>200 m</ScaleBar>
                    <AttributionLink href="#terms">Terms</AttributionLink>
                    <AttributionLink href="#report">Report a map error</AttributionLink>
                  </Attribution>
                </MapBox>
              </Card>
            </Board>
          </Main>
        </Screen>
        <Arrow width="256" height="188" viewBox="0 0 256 188" aria-hidden="true">
          <path d="M249 4.500L104 106 23.500 158.500 19 152Q17.500 150 16.500 152.500L2.500 178Q1 182 5 181L34 175.500Q38 174 35 171.500L30.500 166.500 110 110 250.500 8Q252 4 249 4.500z" fill="#fb3845" />
        </Arrow>
      </Frame>
    </Desktop>
  );
}
